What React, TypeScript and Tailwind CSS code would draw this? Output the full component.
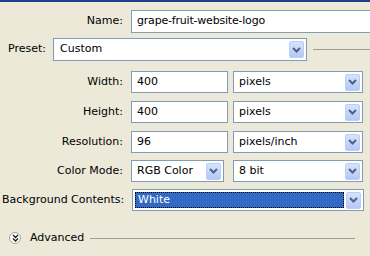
import React from 'react';

const font = { fontFamily: '"DejaVu Sans", Tahoma, sans-serif' };

// XP style combo arrow button
function DropButton() {
  return (
    <div className="flex h-[17px] w-[15px] shrink-0 items-center justify-center rounded-[2px] border border-[#b9cdf5] bg-gradient-to-b from-[#d6e3fd] to-[#b4c8f5]">
      <svg width="9" height="6" viewBox="0 0 9 6">
        <path d="M1 1l3.5 3.5L8 1" fill="none" stroke="#4d6185" strokeWidth="2" />
      </svg>
    </div>
  );
}

function Select({ value, className = '', selected = false }: { value: string; className?: string; selected?: boolean }) {
  return (
    <div className={`flex h-[22px] items-center border border-[#7f9db9] bg-white pr-[2px] ${className}`}>
      {selected ? (
        <div className="ml-[2px] mr-[2px] flex h-[16px] flex-1 items-center border border-dotted border-black bg-[#316ac5] pl-[2px] text-white">
          {value}
        </div>
      ) : (
        <div className="flex-1 pl-[5px]">{value}</div>
      )}
      <DropButton />
    </div>
  );
}

function Field({ label, children, mt }: { label: string; children: React.ReactNode; mt: string }) {
  return (
    <div className={`flex items-center ${mt}`}>
      <div className="w-[127px] shrink-0 pr-[4px] text-right whitespace-nowrap">{label}</div>
      <div className="ml-[4px] flex gap-[5px]">{children}</div>
    </div>
  );
}

export default function App() {
  return (
    <div className="h-[256px] w-[370px] overflow-hidden bg-[#ece9d8] text-[11px] text-black" style={font}>
      <div className="h-[2px] bg-[#1c3f8e]" />

      <div className="mt-[8px] flex items-center">
        <div className="w-[127px] shrink-0 pr-[4px] text-right">Name:</div>
        <div className="ml-[4px] flex h-[23px] w-[250px] shrink-0 items-center border border-[#7f9db9] bg-white pl-[5px] tracking-[-0.2px]">
          grape-fruit-website-logo
        </div>
      </div>

      <div className="mt-[5px] flex items-center">
        <div className="w-[53px] shrink-0 pl-[8px]">Preset:</div>
        <div className="flex h-[23px] w-[254px] shrink-0 items-center border border-[#7f9db9] bg-white pr-[2px]">
          <div className="flex-1 pl-[6px]">Custom</div>
          <DropButton />
        </div>
        <div className="ml-[6px] h-px flex-1 bg-[#9d9d95]" />
      </div>

      <Field label="Width:" mt="mt-[10px]">
        <div className="flex h-[22px] w-[97px] items-center border border-[#7f9db9] bg-white pl-[5px]">400</div>
        <Select value="pixels" className="w-[130px]" />
      </Field>

      <Field label="Height:" mt="mt-[8px]">
        <div className="flex h-[22px] w-[97px] items-center border border-[#7f9db9] bg-white pl-[5px]">400</div>
        <Select value="pixels" className="w-[130px]" />
      </Field>

      <Field label="Resolution:" mt="mt-[8px]">
        <div className="flex h-[22px] w-[97px] items-center border border-[#7f9db9] bg-white pl-[5px]">96</div>
        <Select value="pixels/inch" className="w-[130px]" />
      </Field>

      <Field label="Color Mode:" mt="mt-[7px]">
        <Select value="RGB Color" className="w-[93px]" />
        <Select value="8 bit" className="w-[130px] ml-[4px]" />
      </Field>

      <div className="mt-[7px] flex items-center">
        <div className="w-[131px] shrink-0 pl-[2px] whitespace-nowrap">Background Contents:</div>
        <Select value="White" selected className="w-[232px] ml-[1px]" />
      </div>

      <div className="mt-[19px] flex items-center pl-[9px]">
        <div className="flex h-[12px] w-[12px] items-center justify-center rounded-full border border-[#a5a39a] bg-white">
          <svg width="7" height="8" viewBox="0 0 7 8">
            <path d="M1 1l2.5 2.5L6 1M1 4.5l2.5 2.5L6 4.5" fill="none" stroke="#222" strokeWidth="1.4" />
          </svg>
        </div>
        <div className="ml-[9px]">Advanced</div>
        <div className="ml-[6px] mr-[15px] h-px flex-1 bg-[#9d9d95]" />
      </div>
    </div>
  );
}
